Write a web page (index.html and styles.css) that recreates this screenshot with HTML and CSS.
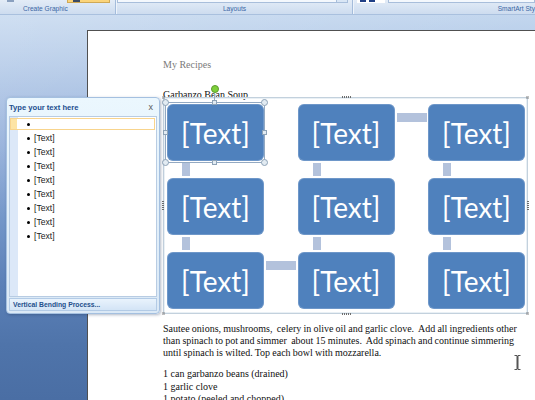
FILE: index.html
```html
<!DOCTYPE html>
<html lang="en">
  <head>
    <meta charset="UTF-8" />
    <meta name="viewport" content="width=device-width, initial-scale=1.0" />
    <title>My Recipes - SmartArt</title>
    <link rel="stylesheet" href="styles.css">
  </head>
  <body>
    <div class="ribbon">
      <div class="group group-create">
        <div class="controls">
          <span class="tiny-icon"></span>
          <span class="btn-on"><span class="btn-mark"></span></span>
        </div>
        <div class="label">Create Graphic</div>
      </div>
      <div class="group group-layouts">
        <div class="controls">
          <span class="gallery"><span class="gallery-scroll"></span></span>
        </div>
        <div class="label">Layouts</div>
      </div>
      <div class="group group-styles">
        <div class="controls">
          <span class="color-btn"><span class="bit"></span><span class="bit"></span></span>
          <span class="gallery wide"></span>
        </div>
        <div class="label">SmartArt Sty</div>
      </div>
    </div>

    <div class="workspace">
      <div class="page">
        <p class="doc-title">My Recipes</p>
        <p class="doc-heading">Garbanzo Bean Soup</p>

        <div class="smartart">
          <span class="grip grip-top"></span>
          <span class="grip grip-bottom"></span>
          <span class="grip grip-left"></span>
          <span class="grip grip-right"></span>
          <span class="corner corner-tl"></span>
          <span class="corner corner-tr"></span>
          <span class="corner corner-bl"></span>
          <span class="corner corner-br"></span>

          <div class="diagram">
            <div class="node down selected">
              [Text]
              <div class="selection">
                <span class="rotate"></span>
                <span class="handle round h-tl"></span>
                <span class="handle round h-tr"></span>
                <span class="handle round h-bl"></span>
                <span class="handle round h-br"></span>
                <span class="handle square h-t"></span>
                <span class="handle square h-b"></span>
                <span class="handle square h-l"></span>
                <span class="handle square h-r"></span>
              </div>
            </div>
            <div class="node down right">[Text]</div>
            <div class="node down">[Text]</div>
            <div class="node down">[Text]</div>
            <div class="node down">[Text]</div>
            <div class="node down">[Text]</div>
            <div class="node right">[Text]</div>
            <div class="node">[Text]</div>
            <div class="node">[Text]</div>
          </div>
        </div>

        <p class="doc-text method">Sautee onions, mushrooms,&nbsp; celery in olive oil and garlic clove.&nbsp; Add all ingredients other than spinach to pot and simmer&nbsp; about 15 minutes.&nbsp; Add spinach and continue simmering until spinach is wilted. Top each bowl with mozzarella.</p>
        <p class="doc-text list">1 can garbanzo beans (drained)<br>1 garlic clove<br>1 potato (peeled and chopped)</p>
      </div>

      <div class="text-pane">
        <div class="pane-head">
          <span class="pane-title">Type your text here</span>
          <span class="pane-close">x</span>
        </div>
        <ul class="pane-list">
          <li class="item active"><span class="dot"></span></li>
          <li class="item"><span class="dot"></span>[Text]</li>
          <li class="item"><span class="dot"></span>[Text]</li>
          <li class="item"><span class="dot"></span>[Text]</li>
          <li class="item"><span class="dot"></span>[Text]</li>
          <li class="item"><span class="dot"></span>[Text]</li>
          <li class="item"><span class="dot"></span>[Text]</li>
          <li class="item"><span class="dot"></span>[Text]</li>
          <li class="item"><span class="dot"></span>[Text]</li>
        </ul>
        <div class="pane-foot">Vertical Bending Process...</div>
      </div>

      <svg class="ibeam" width="7" height="15" viewBox="0 0 7 15">
        <path d="M0.5 0.5h2.5v14h-2.5M6.5 0.5h-2.5v14h2.5M3.5 1v13" fill="none" stroke="#555" stroke-width="1"/>
      </svg>
    </div>
  </body>
</html>
```
FILE: styles.css
```css
body {
  margin: 0;
  width: 535px;
  height: 400px;
  overflow: hidden;
  font-family: "Liberation Sans", Arial, sans-serif;
  background-color: #4c70a6;
}
p {
  margin: 0;
}

/* ribbon (only the bottom strip is visible) */
.ribbon {
  display: flex;
  height: 15px;
  background: linear-gradient(#e3ecf7, #cddcef);
  border-bottom: 1px solid #a9c0de;
  box-sizing: border-box;
}
.group {
  position: relative;
  height: 100%;
  border-right: 1px solid #a4bcdb;
  box-shadow: 1px 0 0 #eef4fb;
  margin-right: 1px;
  box-sizing: border-box;
  overflow: hidden;
}
.group-create {
  width: 116px;
}
.group-layouts {
  width: 236px;
}
.group-styles {
  flex: 1;
  border-right: none;
  margin-right: 0;
}
.controls {
  display: flex;
  height: 3px;
}
.label {
  font-size: 6.6px;
  line-height: 11px;
  color: #3b67a5;
  white-space: nowrap;
}
.group-create .label {
  padding-left: 23px;
}
.group-layouts .label {
  text-align: center;
}
.group-styles .label {
  text-align: right;
}
.tiny-icon {
  width: 7px;
  height: 2px;
  margin-left: 7px;
  background: #8aa0bf;
}
.btn-on {
  display: flex;
  width: 43px;
  margin-left: 53px;
  background: #fbd47a;
  border: 1px solid #cfa956;
  border-top: none;
  box-sizing: border-box;
}
.btn-mark {
  width: 7px;
  height: 2px;
  margin-left: 5px;
  background: #3b4b62;
}
.gallery {
  display: flex;
  justify-content: flex-end;
  width: 231px;
  background: #f4f8fd;
  border: 1px solid #a8bedb;
  border-top: none;
  box-sizing: border-box;
}
.gallery.wide {
  flex: 1;
  margin-left: 3px;
}
.gallery-scroll {
  width: 10px;
  background: #d9e6f5;
  border-left: 1px solid #a8bedb;
}
.color-btn {
  display: flex;
  gap: 3px;
  width: 28px;
  margin-left: 3px;
  padding-left: 3px;
  background: #ffffff;
  box-sizing: border-box;
}
.bit {
  width: 6px;
  height: 2px;
  background: #1f3f86;
}

/* blue workspace */
.workspace {
  position: relative;
  height: 385px;
  display: flex;
  align-items: flex-start;
  background:
    linear-gradient(160deg, rgba(255, 255, 255, 0.22) 0%, rgba(255, 255, 255, 0) 35%),
    linear-gradient(180deg, #c2d6ee 0px, #b1c8e7 50px, #93afda 130px, #7598ca 200px, #5b80b7 270px, #4f74aa 330px, #4a6ea4 385px);
}
.page {
  flex: 1;
  height: 370px;
  margin: 15px 0 0 87px;
  padding: 28px 0 0 75px;
  overflow: hidden;
  background: #ffffff;
  border-left: 1px solid #505050;
  border-top: 1px solid #505050;
  box-sizing: border-box;
  font-family: "Liberation Serif", "Times New Roman", serif;
  font-size: 10px;
  line-height: 12px;
  color: #111111;
}
.doc-title {
  color: #7a7a7a;
}
.doc-heading {
  margin-top: 18px;
}

/* SmartArt frame */
.smartart {
  position: relative;
  width: 365px;
  margin-top: -4px;
  padding: 6px 2px 4px 3px;
  border: 1px solid #c3d1dd;
  box-shadow: inset 0 0 0 1px #e9f0f5;
  box-sizing: border-box;
}
.grip {
  position: absolute;
  background: repeating-linear-gradient(90deg, #6d6d6d 0 1px, transparent 1px 2px);
}
.grip-top,
.grip-bottom {
  left: 178px;
  width: 9px;
  height: 2px;
}
.grip-top {
  top: -2px;
}
.grip-bottom {
  bottom: -2px;
}
.grip-left,
.grip-right {
  top: 103px;
  width: 2px;
  height: 9px;
  background: repeating-linear-gradient(180deg, #6d6d6d 0 1px, transparent 1px 2px);
}
.grip-left {
  left: -2px;
}
.grip-right {
  right: -2px;
}
.corner {
  position: absolute;
  width: 3px;
  height: 3px;
  background: radial-gradient(circle, #777 0 0.6px, transparent 0.8px) 0 0 / 2px 2px;
}
.corner-tl {
  top: -2px;
  left: -2px;
}
.corner-tr {
  top: -2px;
  right: -2px;
}
.corner-bl {
  bottom: -2px;
  left: -2px;
}
.corner-br {
  bottom: -2px;
  right: -2px;
}

.diagram {
  display: grid;
  grid-template-columns: repeat(3, 97px);
  grid-auto-rows: 57px;
  column-gap: 33.5px;
  row-gap: 17px;
}
.node {
  position: relative;
  display: flex;
  justify-content: center;
  align-items: center;
  background: #4f81bd;
  border-radius: 6px;
  box-shadow: inset 0 0 0 1px rgba(255, 255, 255, 0.18);
  font-family: Lato, "Open Sans", sans-serif;
  font-size: 28px;
  line-height: 1;
  color: #ffffff;
}
.node.down::after {
  content: "";
  position: absolute;
  left: 15px;
  top: calc(100% + 2px);
  width: 8px;
  height: 13px;
  background: #b3c2dc;
}
.node.right::before {
  content: "";
  position: absolute;
  left: calc(100% + 2px);
  top: 9px;
  width: 30px;
  height: 9px;
  background: #b3c2dc;
}

/* selected shape */
.selection {
  position: absolute;
  inset: -2px -1px -2px -2px;
  border: 1px solid #93a9c2;
}
.handle {
  position: absolute;
  background: #e2ebf2;
  border: 1px solid #8ea3b7;
  box-sizing: border-box;
}
.handle.round {
  width: 7px;
  height: 7px;
  border-radius: 50%;
}
.handle.square {
  width: 5px;
  height: 5px;
}
.h-tl { top: -4px; left: -4px; }
.h-tr { top: -4px; right: -4px; }
.h-bl { bottom: -4px; left: -4px; }
.h-br { bottom: -4px; right: -4px; }
.h-t { top: -3px; left: calc(50% - 3px); }
.h-b { bottom: -3px; left: calc(50% - 3px); }
.h-l { left: -3px; top: calc(50% - 3px); }
.h-r { right: -3px; top: calc(50% - 3px); }
.rotate {
  position: absolute;
  left: calc(50% - 4px);
  top: -18px;
  width: 6px;
  height: 6px;
  border-radius: 50%;
  background: #7ed03a;
  border: 1px solid #5d9a2e;
}
.rotate::after {
  content: "";
  position: absolute;
  left: 2px;
  top: 7px;
  width: 1px;
  height: 9px;
  background: #93a9c2;
}

.doc-text {
  width: 365px;
}
.method {
  margin-top: 9px;
  margin-bottom: 9px;
  word-spacing: -0.3px;
}
.list {
  line-height: 12.5px;
}

/* text pane */
.text-pane {
  position: absolute;
  left: 6px;
  top: 82px;
  width: 154px;
  height: 217px;
  display: flex;
  flex-direction: column;
  padding: 0 2px 2px 2px;
  border: 1px solid #a4c0e0;
  border-radius: 4px;
  background: linear-gradient(#ebf7fe, #dbe9f6);
  box-shadow: 1px 1px 3px rgba(30, 50, 90, 0.35);
  box-sizing: border-box;
}
.pane-head {
  display: flex;
  justify-content: space-between;
  align-items: center;
  height: 18px;
  padding: 0 4px 0 0;
}
.pane-title {
  font-size: 7.6px;
  font-weight: bold;
  color: #1d4f8f;
}
.pane-close {
  font-size: 9px;
  color: #5a5a5a;
}
.pane-list {
  flex: 1;
  margin: 0;
  padding: 0;
  list-style: none;
  background: linear-gradient(90deg, #dce8f8 8px, #ffffff 8px);
  border: 1px solid #b8cce3;
}
.item {
  display: flex;
  align-items: center;
  height: 14px;
  padding-left: 17px;
  font-size: 8.6px;
  color: #1a1a1a;
  box-sizing: border-box;
}
.item.active {
  height: 12px;
  margin: 1px 1px 1px 0;
  padding-left: 16px;
  background: linear-gradient(90deg, #fde4a4 6px, #ffffff 6px);
  border: 1px solid #f8d48c;
}
.dot {
  width: 3px;
  height: 3px;
  margin-right: 4px;
  border-radius: 50%;
  background: #000000;
}
.pane-foot {
  height: 13px;
  margin-top: 1px;
  padding-left: 3px;
  font-size: 6.8px;
  font-weight: bold;
  line-height: 11px;
  color: #24508c;
  background: linear-gradient(#e9f3fc, #d3e4f6);
  border: 1px solid #b3cbe6;
  box-sizing: border-box;
}

.ibeam {
  position: absolute;
  left: 514px;
  top: 340px;
}
```
